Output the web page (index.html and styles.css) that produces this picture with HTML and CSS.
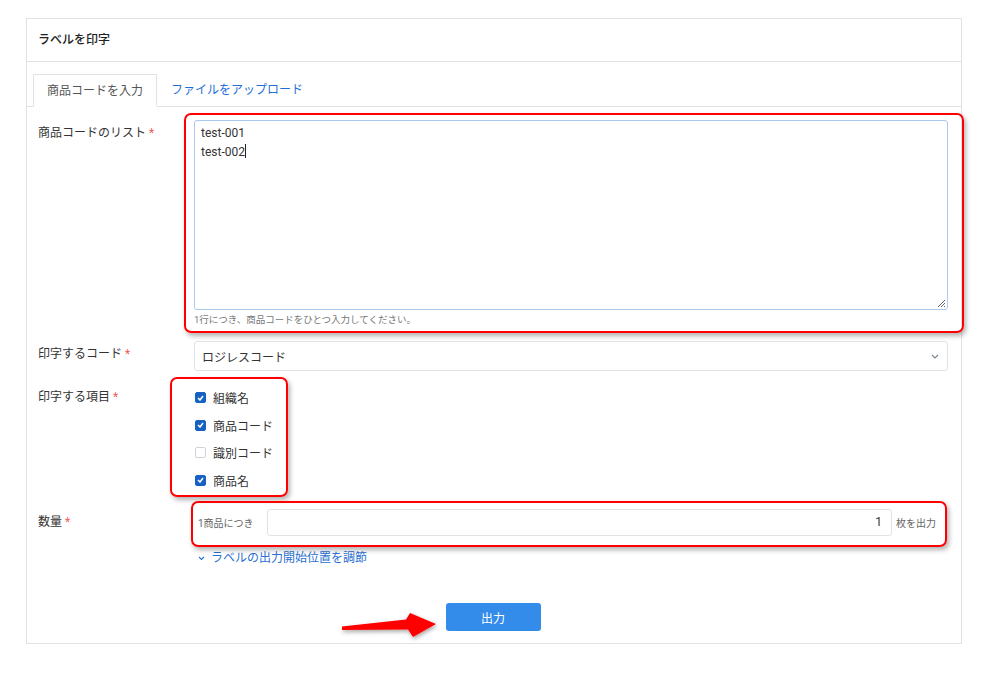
FILE: index.html
```html
<!DOCTYPE html>
<html lang="ja">
<head>
<meta charset="utf-8">
<title>ラベルを印字</title>
<link rel="stylesheet" href="styles.css">
</head>
<body>
<div class="page">
  <div class="card">
    <div class="card-header">ラベルを印字</div>
    <div class="tabs">
      <div class="tab active">商品コードを入力</div>
      <div class="tab link">ファイルをアップロード</div>
    </div>
    <div class="form">
      <div class="row">
        <div class="label">商品コードのリスト <span class="req">*</span></div>
        <div class="field">
          <div class="textarea">test-001<br>test-002<span class="caret"></span>
            <svg class="grip" width="9" height="9" viewBox="0 0 9 9"><path d="M8 1 L1 8 M8 4 L4 8 M8 7 L7 8" stroke="#666" stroke-width="1" fill="none"/></svg>
          </div>
          <div class="help">1行につき、商品コードをひとつ入力してください。</div>
        </div>
      </div>
      <div class="row">
        <div class="label">印字するコード <span class="req">*</span></div>
        <div class="field">
          <div class="select"><span>ロジレスコード</span>
            <svg width="8" height="5" viewBox="0 0 8 5"><path d="M1 1 L4 4 L7 1" stroke="#7a8594" stroke-width="1.2" fill="none"/></svg>
          </div>
        </div>
      </div>
      <div class="row checks-row">
        <div class="label">印字する項目 <span class="req">*</span></div>
        <div class="field">
          <div class="check"><span class="box on"><svg width="7" height="6" viewBox="0 0 7 6"><path d="M1 3 L3 5 L6 1" stroke="#fff" stroke-width="1.5" fill="none"/></svg></span>組織名</div>
          <div class="check"><span class="box on"><svg width="7" height="6" viewBox="0 0 7 6"><path d="M1 3 L3 5 L6 1" stroke="#fff" stroke-width="1.5" fill="none"/></svg></span>商品コード</div>
          <div class="check"><span class="box"></span>識別コード</div>
          <div class="check"><span class="box on"><svg width="7" height="6" viewBox="0 0 7 6"><path d="M1 3 L3 5 L6 1" stroke="#fff" stroke-width="1.5" fill="none"/></svg></span>商品名</div>
        </div>
      </div>
      <div class="row qty-row">
        <div class="label">数量 <span class="req">*</span></div>
        <div class="field qty">
          <span class="prefix">1商品につき</span>
          <div class="qty-input">1</div>
          <span class="suffix">枚を出力</span>
        </div>
      </div>
      <div class="adjust">
        <svg width="7" height="5" viewBox="0 0 7 5"><path d="M1 1 L3.5 3.5 L6 1" stroke="#2a6fd1" stroke-width="1.1" fill="none"/></svg>
        <span>ラベルの出力開始位置を調節</span>
      </div>
      <div class="actions"><button class="btn">出力</button></div>
    </div>
  </div>
</div>

<div class="mark mark-1"></div>
<div class="mark mark-2"></div>
<div class="mark mark-3"></div>
<svg class="arrow" width="984" height="681" viewBox="0 0 984 681">
  <defs>
    <filter id="sh" x="-20%" y="-50%" width="140%" height="200%">
      <feDropShadow dx="1" dy="2" stdDeviation="2" flood-color="#000" flood-opacity="0.35"/>
    </filter>
  </defs>
  <polygon points="342,626.5 406,619.5 410,613 436,624 413,637 408,629.5 342,630" fill="#ff0000" filter="url(#sh)"/>
</svg>
</body>
</html>
```
FILE: styles.css
```css
* { box-sizing: border-box; }
html, body { margin: 0; padding: 0; background: #fff; }
body {
  font-family: Roboto, "Noto Sans CJK JP", sans-serif;
  font-size: 12px;
  color: #333;
  position: relative;
  width: 984px;
  height: 681px;
  overflow: hidden;
}
.page { padding: 18px 0 0 26px; }
.card {
  width: 936px;
  border: 1px solid #dfe3e8;
  background: #fff;
}
.card-header {
  height: 43px;
  line-height: 42px;
  padding: 0 11px;
  border-bottom: 1px solid #dfe3e8;
  font-weight: 500;
  color: #222;
}
.tabs {
  display: flex;
  padding: 12px 0 0 6px;
  border-bottom: 1px solid #dfe3e8;
}
.tab {
  height: 32px;
  line-height: 32px;
  padding: 0 13px;
}
.tab.active {
  border: 1px solid #dfe3e8;
  border-bottom: 1px solid #fff;
  margin-bottom: -1px;
  height: 33px;
  color: #555;
  background: #fff;
}
.tab.link { color: #1e6fd9; padding-left: 14px; }
.form { padding: 13px 13px 12px 11px; }
.row {
  display: grid;
  grid-template-columns: 156px 1fr;
  margin-bottom: 13px;
}
.label { line-height: 26px; color: #333; }
.req { color: #f25b5b; }
.textarea {
  position: relative;
  height: 190px;
  border: 1px solid #a9c9ef;
  border-radius: 3px;
  padding: 3px 6px;
  line-height: 19px;
  color: #333;
}
.caret { display: inline-block; width: 1px; height: 14px; background: #222; vertical-align: -2px; }
.grip { position: absolute; right: 1px; bottom: 1px; }
.help {
  margin-top: 2px;
  line-height: 16px;
  font-size: 9.5px;
  color: #777;
}
.select {
  height: 30px;
  border: 1px solid #dfe3e8;
  border-radius: 3px;
  padding: 0 8px 0 7px;
  display: flex;
  align-items: center;
  justify-content: space-between;
}
.checks-row { margin-bottom: 15px; }
.check {
  height: 27.5px;
  display: flex;
  align-items: center;
}
.box {
  width: 11px;
  height: 11px;
  margin: 0 7px 0 1px;
  border: 1px solid #cfd4da;
  border-radius: 2px;
  display: flex;
  align-items: center;
  justify-content: center;
  background: #fff;
}
.box.on { background: #1662c4; border-color: #1662c4; }
.qty-row { margin-bottom: 0; }
.qty { display: flex; align-items: center; }
.prefix { width: 73px; padding-left: 4px; font-size: 10px; color: #666; }
.qty-input {
  flex: 1;
  height: 27px;
  line-height: 25px;
  border: 1px solid #dfe3e8;
  border-radius: 3px;
  text-align: right;
  padding-right: 9px;
  font-size: 12px;
  color: #333;
}
.suffix { width: 56px; padding-left: 4px; font-size: 10px; color: #666; }
.adjust {
  margin: 14px 0 0 160px;
  line-height: 16px;
  color: #2a6fd1;
  display: flex;
  align-items: center;
  gap: 6px;
}
.actions { display: flex; justify-content: center; margin-top: 37px; }
.btn {
  width: 95px;
  height: 28px;
  border: none;
  border-radius: 3px;
  background: #338cea;
  color: #fff;
  font-family: inherit;
  font-size: 12px;
}
.mark {
  position: absolute;
  border: 2.5px solid #ff0000;
  border-radius: 7px;
  box-shadow: 2px 3px 5px rgba(0,0,0,0.3);
  pointer-events: none;
}
.mark-1 { left: 184px; top: 113px; width: 780px; height: 220px; }
.mark-2 { left: 170px; top: 377px; width: 118px; height: 120px; }
.mark-3 { left: 191px; top: 501px; width: 756px; height: 46px; }
.arrow { position: absolute; left: 0; top: 0; pointer-events: none; }
```
